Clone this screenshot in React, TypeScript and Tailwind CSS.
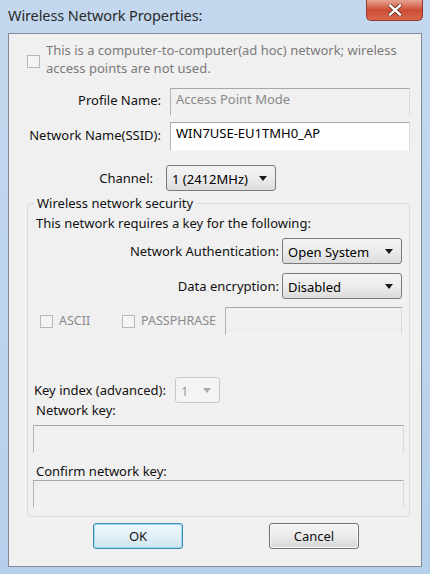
const font = { fontFamily: '"Noto Sans", "Open Sans", sans-serif' };

function Arrow({ disabled }: { disabled?: boolean }) {
  return (
    <svg width="8" height="5" viewBox="0 0 8 5" className="shrink-0">
      <path d="M0 0h8L4 5z" fill={disabled ? "#a9a9a9" : "#1a1a1a"} />
    </svg>
  );
}

function Check({ className = "" }: { className?: string }) {
  return <span className={"block w-[13px] h-[13px] border border-[#b8b8b8] bg-[#f4f4f4] shrink-0 " + className} />;
}

function Combo({ value, width, disabled }: { value: string; width: string; disabled?: boolean }) {
  return (
    <div
      className={
        "h-[26px] shrink-0 flex items-center justify-between pl-[5px] pr-[8px] rounded-[3px] border " +
        width +
        (disabled
          ? " border-[#c9c9c9] bg-[#f4f4f4] text-[#9a9a9a]"
          : " border-[#7a7a7a] bg-gradient-to-b from-[#f4f4f4] via-[#ececec] to-[#dcdcdc] text-black")
      }
    >
      <span className="text-[13px] leading-[16px] pt-[1px]">{value}</span>
      <Arrow disabled={disabled} />
    </div>
  );
}

function TextBox({ value, white, className = "" }: { value?: string; white?: boolean; className?: string }) {
  return (
    <div
      className={
        "shrink-0 border border-t-[#a8a8a8] border-l-[#b4b4b4] border-r-[#dadada] border-b-[#f6f6f6] px-[5px] pt-[2px] text-[13px] leading-[16px] " +
        (white ? "bg-white text-black " : "bg-[#f0f0f0] text-[#8a8a8a] ") +
        className
      }
    >
      {value}
    </div>
  );
}

export default function App() {
  return (
    <div
      style={font}
      className="w-[430px] h-[574px] flex flex-col bg-gradient-to-b from-[#c3d8ee] via-[#bed5ee] to-[#b6cfea] text-[#111]"
    >
      {/* title bar */}
      <div className="h-[33px] flex items-start justify-between shrink-0">
        <div className="pl-[8px] pt-[5px] text-[14.5px] text-[#2a2a2a] tracking-[-0.1px]">Wireless Network Properties:</div>
        <div className="mr-[7px] w-[57px] h-[21px] rounded-b-[5px] border border-t-0 border-[#8f3a2c] bg-gradient-to-b from-[#e7a293] via-[#cc4b33] to-[#d8674c] flex items-center justify-center">
          <svg width="14" height="12" viewBox="0 0 14 12">
            <path d="M2 1.5l10 9M12 1.5l-10 9" stroke="#5a2018" strokeWidth="3.8" strokeLinecap="square" />
            <path d="M2 1.5l10 9M12 1.5l-10 9" stroke="#ffffff" strokeWidth="2.4" strokeLinecap="square" />
          </svg>
        </div>
      </div>

      {/* content panel */}
      <div className="mx-[8px] mb-[7px] flex-1 border border-[#7f8b98] bg-[#f0f0f0] flex flex-col text-[13px]">
        {/* ad hoc */}
        <div className="flex items-start gap-[6px] pl-[18px] pt-[7px] leading-[18px] text-[#7a7a7a]">
          <Check className="mt-[14px]" />
          <div>
            This is a computer-to-computer(ad hoc) network; wireless
            <br />
            access points are not used.
          </div>
        </div>

        {/* profile name */}
        <div className="flex items-start mt-[11px]">
          <div className="w-[152px] text-right pt-[4px] leading-[16px]">Profile Name:</div>
          <TextBox value="Access Point Mode" className="ml-[9px] w-[240px] h-[28px]" />
        </div>
        <div className="flex items-start mt-[6px]">
          <div className="w-[152px] text-right pt-[5px] leading-[16px]">Network Name(SSID):</div>
          <TextBox value="WIN7USE-EU1TMH0_AP" white className="ml-[9px] w-[240px] h-[29px]" />
        </div>
        <div className="flex items-center mt-[14px]">
          <div className="w-[144px] text-right leading-[16px]">Channel:</div>
          <Combo value="1 (2412MHz)" width="ml-[13px] w-[110px]" />
        </div>

        {/* group box */}
        <div className="relative ml-[18px] mr-[11px] mt-[12px] border border-[#d5dde3] rounded-[3px] pl-[8px] pr-[8px] pt-[11px] pb-[8px] flex flex-col">
          <div className="absolute -top-[9px] left-[6px] bg-[#f0f0f0] px-[3px] leading-[16px]">Wireless network security</div>
          <div className="leading-[16px]">This network requires a key for the following:</div>
          <div className="flex items-center justify-end mt-[7px] -mr-[1px]">
            <span className="leading-[16px] mr-[3px]">Network Authentication:</span>
            <Combo value="Open System" width="w-[120px]" />
          </div>
          <div className="flex items-center justify-end mt-[9px] -mr-[1px]">
            <span className="leading-[16px] mr-[3px]">Data encryption:</span>
            <Combo value="Disabled" width="w-[120px]" />
          </div>
          <div className="flex items-center mt-[8px] text-[#8a8a8a] text-[12.5px]">
            <div className="w-[82px] flex items-center ml-[4px]">
              <Check />
              <span className="ml-[6px] leading-[16px]">ASCII</span>
            </div>
            <div className="w-[103px] flex items-center">
              <Check />
              <span className="ml-[6px] leading-[16px]">PASSPHRASE</span>
            </div>
            <TextBox className="flex-1 h-[28px] -mr-[1px]" />
          </div>
          <div className="flex items-center mt-[42px]">
            <span className="leading-[16px] -ml-[2px]">Key index (advanced):</span>
            <Combo value="1" width="ml-[9px] w-[45px]" disabled />
          </div>
          <div className="-mt-[1px] leading-[16px]">Network key:</div>
          <TextBox className="mt-[7px] w-[371px] -ml-[3px] h-[28px]" />
          <div className="mt-[10px] leading-[16px]">Confirm network key:</div>
          <TextBox className="mt-[1px] w-[371px] -ml-[3px] h-[28px]" />
        </div>

        {/* buttons */}
        <div className="flex items-start mt-[6px]">
          <button className="ml-[84px] w-[90px] h-[26px] rounded-[3px] border border-[#3c8cb8] bg-gradient-to-b from-[#eef7fc] via-[#e2f0f8] to-[#cfe4f0] shadow-[inset_0_0_0_1px_#9fd5ef] leading-none">
            OK
          </button>
          <button className="ml-[86px] w-[90px] h-[26px] rounded-[3px] border border-[#707070] bg-gradient-to-b from-[#f4f4f4] via-[#ebebeb] to-[#d6d6d6] shadow-[inset_0_0_0_1px_#fbfbfb] leading-none">
            Cancel
          </button>
        </div>
      </div>
    </div>
  );
}
